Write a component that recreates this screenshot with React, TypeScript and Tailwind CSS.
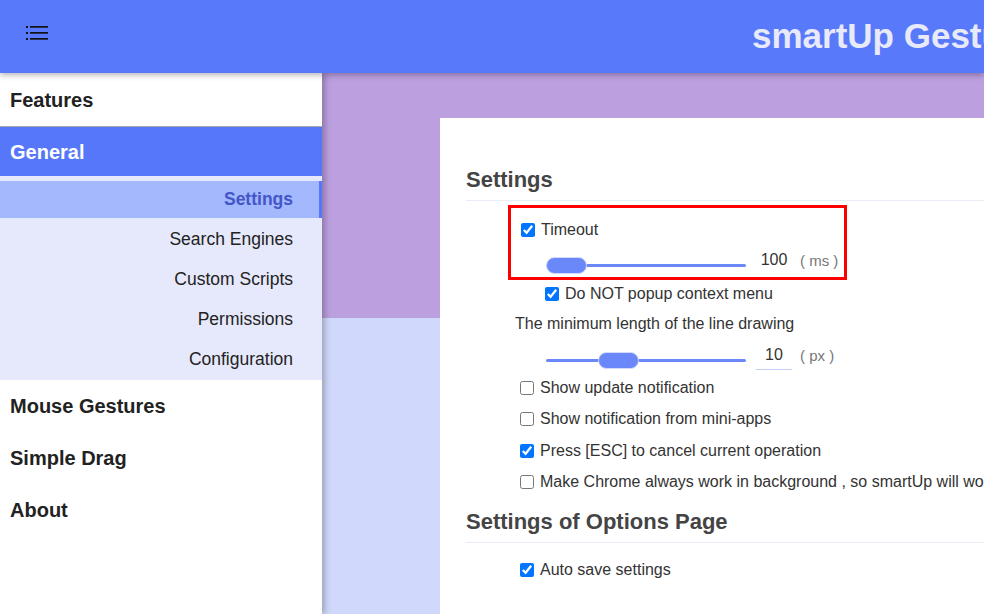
import React from 'react';

const subItems = ['Settings', 'Search Engines', 'Custom Scripts', 'Permissions', 'Configuration'];

function Check({ label, checked }: { label: string; checked?: boolean }) {
  return (
    <label className="flex items-center">
      <input type="checkbox" defaultChecked={checked} className="m-0 mr-[6px] h-[14px] w-[14px] shrink-0" />
      <span>{label}</span>
    </label>
  );
}

function Slider({ offset, value, unit, underline }: { offset: number; value: string; unit: string; underline?: boolean }) {
  return (
    <div className="flex items-center">
      <div className="relative mt-2 flex h-[17px] w-[200px] items-center">
        <div className="h-[3px] w-full rounded-full bg-[#6a88f8]" />
        <div
          className="absolute top-0 h-[17px] w-[41px] rounded-full border border-[#d3dafc] bg-[#6a88fa]"
          style={{ left: offset }}
        />
      </div>
      <div
        className={`ml-[10px] w-[36px] pb-[2px] text-center text-[#333] ${
          underline ? 'border-b border-[#c5cff9]' : 'border-b border-transparent'
        }`}
      >
        {value}
      </div>
      <span className="ml-[8px] text-[15px] text-[#777]">{unit}</span>
    </div>
  );
}

export default function App() {
  return (
    <div className="flex h-[614px] w-[984px] flex-col overflow-hidden font-['Liberation_Sans',Arial,sans-serif]">
      {/* top bar */}
      <header className="relative z-20 flex h-[73px] shrink-0 items-center overflow-hidden whitespace-nowrap bg-[#5879f9] pl-[25px] shadow-[0_2px_6px_rgba(0,0,0,0.3)]">
        <svg width="24" height="24" viewBox="0 0 24 24" className="mt-[-7px] shrink-0">
          <rect x="1" y="5" width="2" height="2" fill="#111" />
          <rect x="1" y="11" width="2" height="2" fill="#111" />
          <rect x="1" y="17" width="2" height="2" fill="#111" />
          <rect x="5" y="5" width="18" height="1.7" fill="#111" />
          <rect x="5" y="11" width="18" height="1.7" fill="#111" />
          <rect x="5" y="17" width="18" height="1.7" fill="#111" />
        </svg>
        <h1 className="ml-[703px] shrink-0 text-[35px] font-bold text-[#e8e9fb]">smartUp Gestures</h1>
      </header>

      <div className="flex min-h-0 flex-1">
        {/* side menu */}
        <nav className="relative z-10 w-[322px] shrink-0 bg-white shadow-[3px_0_6px_rgba(0,0,0,0.25)]">
          <div className="flex h-[54px] items-center border-b border-[#a8a8a8] pl-[10px] text-[20px] font-bold text-[#222]">
            Features
          </div>
          <div className="flex h-[49px] items-center bg-[#5677f9] pl-[10px] text-[20px] font-bold text-white">
            General
          </div>
          <div className="bg-[#e6e9fb] pb-[2px] pt-[5px]">
            {subItems.map((item, i) => (
              <div
                key={item}
                className={`flex items-center justify-end text-[17.5px] ${
                  i === 0
                    ? 'h-[37px] border-r-[3px] border-[#5677f9] bg-[#a4b9fd] pr-[26px] font-bold text-[#4356c8]'
                    : 'h-[40px] pr-[29px] pt-[2px] text-[#222]'
                }`}
              >
                {item}
              </div>
            ))}
          </div>
          {['Mouse Gestures', 'Simple Drag', 'About'].map((item) => (
            <div key={item} className="flex h-[52px] items-center pl-[10px] text-[20px] font-bold text-[#222]">
              {item}
            </div>
          ))}
        </nav>

        {/* content */}
        <main className="min-w-0 flex-1 bg-[linear-gradient(#bb9fdf_0_245px,#d0d9fb_245px)] pl-[118px] pt-[45px]">
          <div className="h-full bg-white pl-[26px] pt-[49px] text-[16px] text-[#333]">
            <h2 className="h-[26px] text-[22px] font-bold leading-[26px] text-[#444]">Settings</h2>
            <div className="mt-[7px] border-b border-[#e9ebf7]" />

            <div className="ml-[42px] mt-[4px]">
              <div className="w-[339px] border-[3px] border-[#f00] pl-[10px] pt-[7px]">
                <div className="flex h-[30px] items-center">
                  <Check label="Timeout" checked />
                </div>
                <div className="flex h-[32px] items-center pl-[25px]">
                  <Slider offset={0} value="100" unit="( ms )" />
                </div>
              </div>

              <div className="flex h-[28px] items-center pl-[37px]">
                <Check label="Do NOT popup context menu" checked />
              </div>
              <div className="flex h-[32px] items-center pl-[7px]">The minimum length of the line drawing</div>
              <div className="flex h-[32px] items-center pl-[38px]">
                <Slider offset={52} value="10" unit="( px )" underline />
              </div>
              <div className="pl-[12px]">
                <div className="flex h-[31px] items-center">
                  <Check label="Show update notification" />
                </div>
                <div className="flex h-[32px] items-center">
                  <Check label="Show notification from mini-apps" />
                </div>
                <div className="flex h-[31px] items-center">
                  <Check label="Press [ESC] to cancel current operation" checked />
                </div>
                <div className="flex h-[32px] items-center whitespace-nowrap">
                  <Check label="Make Chrome always work in background , so smartUp will work even if all windows are closed" />
                </div>
              </div>
            </div>

            <h2 className="mt-[11px] h-[26px] text-[22px] font-bold leading-[26px] text-[#444]">Settings of Options Page</h2>
            <div className="mt-[7px] border-b border-[#e9ebf7]" />
            <div className="ml-[54px] mt-[11px] flex h-[32px] items-center">
              <Check label="Auto save settings" checked />
            </div>
          </div>
        </main>
      </div>
    </div>
  );
}
